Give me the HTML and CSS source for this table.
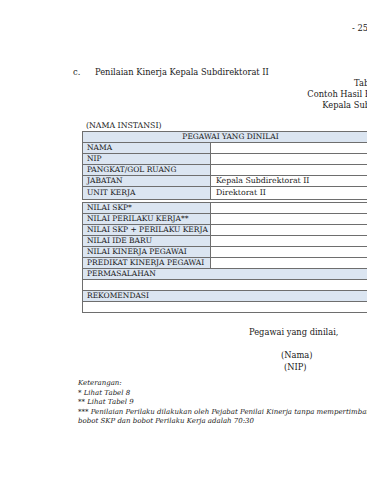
FILE: index.html
```html
<!DOCTYPE html>
<html>
<head>
<meta charset="utf-8">
<link rel="stylesheet" href="styles.css">
</head>
<body>
<div class="page">
  <div class="pagenum">- 25 -</div>
  <div class="section"><span class="sec-no">c.</span><span>Penilaian Kinerja Kepala Subdirektorat II</span></div>
  <div class="caption">
    <div>Tabel 11</div>
    <div>Contoh Hasil Penilaian Kinerja</div>
    <div>Kepala Subdirektorat II</div>
  </div>
  <div class="instansi">(NAMA INSTANSI)</div>
  <table class="grid">
    <colgroup><col class="c1"><col class="c2"></colgroup>
    <tr><td class="lbl head" colspan="2">PEGAWAI YANG DINILAI</td></tr>
    <tr><td class="lbl">NAMA</td><td></td></tr>
    <tr><td class="lbl">NIP</td><td></td></tr>
    <tr><td class="lbl">PANGKAT/GOL RUANG</td><td></td></tr>
    <tr><td class="lbl">JABATAN</td><td>Kepala Subdirektorat II</td></tr>
    <tr class="tall"><td class="lbl">UNIT KERJA</td><td>Direktorat II</td></tr>
  </table>
  <table class="grid second">
    <colgroup><col class="c1"><col class="c2"></colgroup>
    <tr><td class="lbl">NILAI SKP*</td><td></td></tr>
    <tr><td class="lbl">NILAI PERILAKU KERJA**</td><td></td></tr>
    <tr><td class="lbl">NILAI SKP + PERILAKU KERJA</td><td></td></tr>
    <tr><td class="lbl">NILAI IDE BARU</td><td></td></tr>
    <tr><td class="lbl">NILAI KINERJA PEGAWAI</td><td></td></tr>
    <tr><td class="lbl">PREDIKAT KINERJA PEGAWAI</td><td></td></tr>
    <tr><td class="lbl" colspan="2">PERMASALAHAN</td></tr>
    <tr><td colspan="2"></td></tr>
    <tr><td class="lbl" colspan="2">REKOMENDASI</td></tr>
    <tr><td colspan="2"></td></tr>
  </table>
  <div class="sign">
    <div class="sign-title">Pegawai yang dinilai,</div>
    <div class="sign-name">(Nama)</div>
    <div class="sign-nip">(NIP)</div>
  </div>
  <div class="notes">
    <div>Keterangan:</div>
    <div>* Lihat Tabel 8</div>
    <div>** Lihat Tabel 9</div>
    <div>*** Penilaian Perilaku dilakukan oleh Pejabat Penilai Kinerja tanpa mempertimbangkan</div>
    <div>bobot SKP dan bobot Perilaku Kerja adalah 70:30</div>
  </div>
</div>
</body>
</html>
```
FILE: styles.css
```css
html, body {
  margin: 0;
  padding: 0;
  background: #ffffff;
  overflow: hidden;
}
body {
  width: 367px;
  height: 480px;
}
.page {
  width: 460px;
  font-family: "DejaVu Serif", "Liberation Serif", serif;
  font-size: 8.3px;
  color: #1a1a1a;
  padding-top: 22px;
}
.pagenum {
  margin-left: 352px;
  line-height: 12px;
  white-space: nowrap;
}
.section {
  margin-top: 32px;
  margin-left: 73px;
  display: flex;
  line-height: 12px;
  white-space: nowrap;
}
.sec-no {
  width: 22px;
}
.caption {
  width: 200px;
  margin-left: 272px;
  text-align: center;
  line-height: 11px;
  white-space: nowrap;
}
.instansi {
  margin-top: 9px;
  margin-left: 86px;
  font-size: 7.8px;
  line-height: 11px;
  white-space: nowrap;
}
.grid {
  margin-left: 82px;
  width: 296px;
  border-collapse: collapse;
  table-layout: fixed;
  font-size: 7.5px;
}
.grid col.c1 {
  width: 128px;
}
.grid td {
  border: 1px solid #6e6e6e;
  height: 10px;
  padding: 0 3px 0 4px;
  line-height: 10px;
  white-space: nowrap;
  overflow: hidden;
  background: #ffffff;
}
.grid td + td {
  padding-left: 5px;
  font-size: 7.8px;
}
.grid td.lbl {
  background: #dbe5f1;
}
.grid td.head {
  text-align: center;
}
.grid tr.tall td {
  height: 12px;
}
.grid.second {
  margin-top: 2px;
}
.sign {
  margin-left: 249px;
  margin-top: 13px;
  line-height: 12px;
  white-space: nowrap;
}
.sign-name {
  margin-top: 11px;
  margin-left: 32px;
}
.sign-nip {
  margin-left: 35px;
}
.notes {
  margin-left: 78px;
  margin-top: 6px;
  font-size: 7px;
  font-style: italic;
  line-height: 9.5px;
  white-space: nowrap;
}
```
